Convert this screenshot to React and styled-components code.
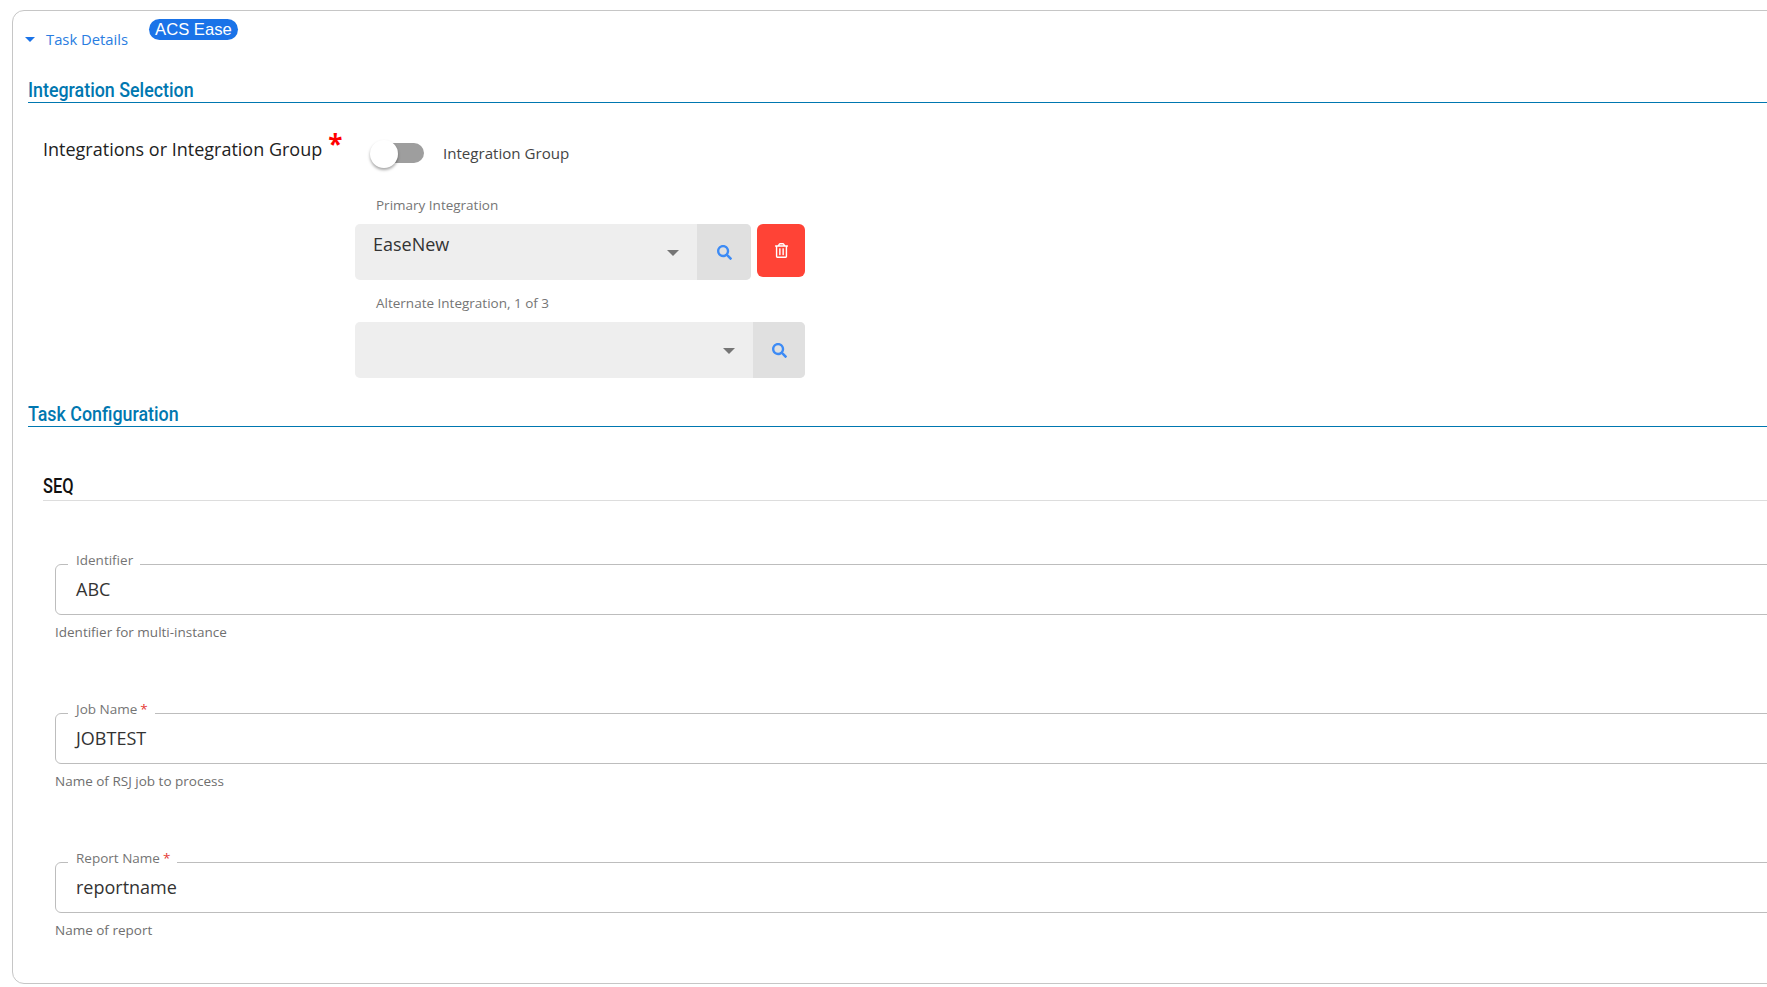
import React from "react";
import styled, { createGlobalStyle } from "styled-components";
import { FaRegTrashAlt, FaSearch } from "react-icons/fa";

const GlobalStyle = createGlobalStyle`
  html, body {
    margin: 0;
    height: 100%;
    background: #fff;
    overflow: hidden;
  }
  body {
    font-family: "Open Sans", "Noto Sans", sans-serif;
    color: #222;
  }
`;

const Panel = styled.div`
  box-sizing: border-box;
  width: 1900px;
  height: 974px;
  margin: 10px 0 0 12px;
  padding: 0 0 0 15px;
  border: 1.5px solid #c6c6c6;
  border-radius: 12px;
`;

const Header = styled.div`
  display: flex;
  align-items: flex-start;
  height: 63px;
`;

const Toggle = styled.div`
  display: flex;
  align-items: center;
  gap: 11px;
  margin: 18px 0 0 -3px;
  color: #2a7de1;
  font-size: 14.8px;
  line-height: 20px;
`;

const Caret = styled.span`
  width: 0;
  height: 0;
  border-left: ${(p) => p.$size}px solid transparent;
  border-right: ${(p) => p.$size}px solid transparent;
  border-top: ${(p) => p.$size}px solid ${(p) => p.$color};
`;

const Badge = styled.span`
  margin: 8px 0 0 21px;
  padding: 0 6px;
  height: 21px;
  line-height: 21px;
  border-radius: 11px;
  background: #1a73e8;
  color: #fff;
  font-family: "Liberation Sans", Arial, sans-serif;
  font-size: 16.6px;
`;

const SectionHead = styled.div`
  height: 28px;
  border-bottom: 1.5px solid #0077b0;
`;

const SectionTitle = styled.h2`
  display: inline-block;
  margin: 0;
  font-family: Roboto, sans-serif;
  font-size: 21px;
  font-weight: 500;
  line-height: 32px;
  color: #0077b0;
  transform: scaleX(0.85);
  transform-origin: left center;
`;

const SelectionRow = styled.div`
  display: flex;
  padding: 32px 0 0 15px;
  height: 295px;
  box-sizing: border-box;
`;

const MainLabel = styled.div`
  width: 312px;
  padding-top: 1px;
  font-size: 18px;
  line-height: 26px;
  color: #222;
`;

const Star = styled.span`
  color: #f00;
  font-size: 26px;
  font-weight: 700;
  line-height: 10px;
  margin-left: 6px;
  vertical-align: 2px;
`;

const Controls = styled.div`
  display: flex;
  flex-direction: column;
  width: 450px;
`;

const SwitchRow = styled.div`
  display: flex;
  align-items: center;
  gap: 19px;
  height: 35px;
  padding-left: 17px;
  font-size: 15.1px;
  color: #444;
`;

const Track = styled.div`
  width: 52px;
  height: 20px;
  border-radius: 10px;
  background: #9e9e9e;
  display: flex;
  align-items: center;
`;

const Knob = styled.div`
  width: 28px;
  height: 28px;
  border-radius: 50%;
  background: #fff;
  margin: 2px 0 0 -2px;
  box-shadow: 0 2px 3px rgba(0, 0, 0, 0.35);
`;

const SmallLabel = styled.div`
  margin: ${(p) => p.$top}px 0 9px 21px;
  font-size: 13.5px;
  line-height: 20px;
  color: #757575;
`;

const SelectRow = styled.div`
  display: flex;
  align-items: flex-start;
  gap: 6px;
`;

const Select = styled.div`
  flex: 1;
  display: flex;
  height: 56px;
  border-radius: 5px;
  background: #eee;
  overflow: hidden;
`;

const SelectValue = styled.div`
  flex: 1;
  padding: 7px 0 0 18px;
  font-size: 18px;
  line-height: 26px;
  color: #333;
`;

const CaretBox = styled.div`
  width: 48px;
  display: flex;
  align-items: center;
  justify-content: center;
  padding-top: 2px;
`;

const SearchBtn = styled.div`
  width: ${(p) => p.$width}px;
  display: flex;
  align-items: center;
  justify-content: center;
  background: #e0e0e0;
  color: #3d8bf5;
  font-size: 15px;
`;

const DeleteBtn = styled.div`
  width: 48px;
  height: 53px;
  display: flex;
  align-items: center;
  justify-content: center;
  border-radius: 6px;
  background: #ff4336;
  color: #fff;
  font-size: 15px;
`;

const Config = styled.div`
  padding: 46px 0 0 15px;
`;

const GroupTitle = styled.div`
  height: 27px;
  border-bottom: 1px solid #ddd;
`;

const GroupName = styled.span`
  display: inline-block;
  font-family: Roboto, sans-serif;
  font-size: 20px;
  font-weight: 500;
  line-height: 26px;
  color: #111;
  transform: scaleX(0.82);
  transform-origin: left center;
`;

const Fields = styled.div`
  display: flex;
  flex-direction: column;
  padding: 49px 0 0 12px;
  gap: 57px;
`;

const Outline = styled.fieldset`
  box-sizing: border-box;
  height: 65px;
  margin: 0;
  padding: 0 0 0 20px;
  border: 1.5px solid #bdbdbd;
  border-radius: 6px;
`;

const Legend = styled.legend`
  margin-left: -8px;
  padding: 0 7px 9px 8px;
  font-size: 13.5px;
  line-height: 20px;
  color: #757575;
`;

const Required = styled.span`
  color: #e53935;
  margin-left: 3px;
`;

const Value = styled.div`
  font-size: 18px;
  line-height: 20px;
  color: #333;
`;

const Helper = styled.div`
  margin-top: 7px;
  font-size: 13.5px;
  line-height: 20px;
  color: #6f6f6f;
`;

const TextField = ({ label, value, helper, required }) => (
  <div>
    <Outline>
      <Legend>
        {label}
        {required && <Required>*</Required>}
      </Legend>
      <Value>{value}</Value>
    </Outline>
    <Helper>{helper}</Helper>
  </div>
);

const LookupSelect = ({ value, buttonWidth }) => (
  <Select>
    <SelectValue>{value}</SelectValue>
    <CaretBox>
      <Caret $size={6} $color="#757575" />
    </CaretBox>
    <SearchBtn $width={buttonWidth}>
      <FaSearch />
    </SearchBtn>
  </Select>
);

export default function App() {
  return (
    <>
      <GlobalStyle />
      <Panel>
        <Header>
          <Toggle>
            <Caret $size={5} $color="#1a73e8" />
            Task Details
          </Toggle>
          <Badge>ACS Ease</Badge>
        </Header>

        <SectionHead>
          <SectionTitle>Integration Selection</SectionTitle>
        </SectionHead>

        <SelectionRow>
          <MainLabel>
            Integrations or Integration Group
            <Star>*</Star>
          </MainLabel>
          <Controls>
            <SwitchRow>
              <Track>
                <Knob />
              </Track>
              Integration Group
            </SwitchRow>
            <SmallLabel $top={25}>Primary Integration</SmallLabel>
            <SelectRow>
              <LookupSelect value="EaseNew" buttonWidth={54} />
              <DeleteBtn>
                <FaRegTrashAlt />
              </DeleteBtn>
            </SelectRow>
            <SmallLabel $top={13}>Alternate Integration, 1 of 3</SmallLabel>
            <SelectRow>
              <LookupSelect buttonWidth={52} />
            </SelectRow>
          </Controls>
        </SelectionRow>

        <SectionHead>
          <SectionTitle>Task Configuration</SectionTitle>
        </SectionHead>

        <Config>
          <GroupTitle>
            <GroupName>SEQ</GroupName>
          </GroupTitle>
          <Fields>
            <TextField label="Identifier" value="ABC" helper="Identifier for multi-instance" />
            <TextField label="Job Name" value="JOBTEST" helper="Name of RSJ job to process" required />
            <TextField label="Report Name" value="reportname" helper="Name of report" required />
          </Fields>
        </Config>
      </Panel>
    </>
  );
}
